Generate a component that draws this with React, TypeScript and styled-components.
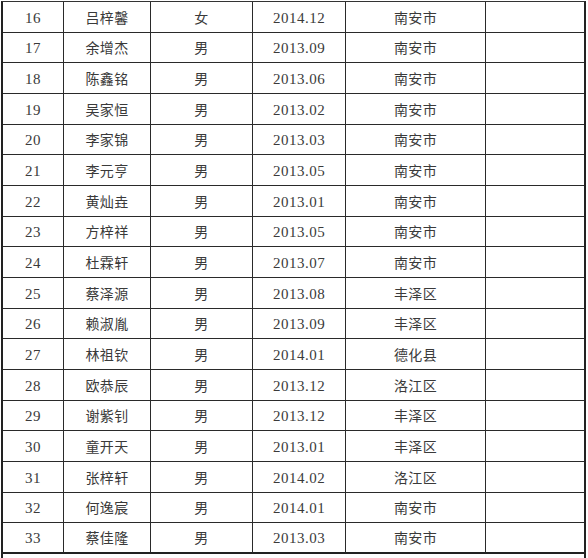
import React from 'react'
import styled, { createGlobalStyle } from 'styled-components'

const GlobalStyle = createGlobalStyle`
  html, body {
    margin: 0;
    padding: 0;
    background: #fff;
  }
`

const Page = styled.div`
  padding: 1px 0 0 1px;
  width: 588px;
  height: 558px;
  overflow: hidden;
  box-sizing: border-box;
`

const Sheet = styled.div`
  display: grid;
  grid-template-columns: 61px 87px 102px 93px 140px 98px;
  grid-auto-rows: 30.67px;
  width: 585px;
  box-sizing: border-box;
  border-top: 1px solid #333;
  border-left: 2px solid #222;
  border-right: 2px solid #222;
  color: #3a3a3a;
`

const Cell = styled.div<{ $latin?: boolean; $last?: boolean; $lastRow?: boolean }>`
  display: flex;
  align-items: center;
  justify-content: center;
  box-sizing: border-box;
  padding-top: ${({ $latin }) => ($latin ? '3px' : '0')};
  border-right: ${({ $last }) => ($last ? 'none' : '1px solid #2a2a2a')};
  border-bottom: ${({ $lastRow }) => ($lastRow ? '2px solid #222' : '1px solid #2a2a2a')};
  font-family: ${({ $latin }) =>
    $latin
      ? '"Liberation Serif", "Noto Sans CJK SC", serif'
      : '"Noto Sans CJK SC", sans-serif'};
  font-size: ${({ $latin }) => ($latin ? '15px' : '14px')};
  letter-spacing: ${({ $latin }) => ($latin ? '0.5px' : '0.3px')};
  line-height: 1;
  white-space: nowrap;
`

const Tail = styled.div`
  grid-column: 1 / -1;
`

const rows: [string, string, string, string, string][] = [
  ['16', '吕梓馨', '女', '2014.12', '南安市'],
  ['17', '余增杰', '男', '2013.09', '南安市'],
  ['18', '陈鑫铭', '男', '2013.06', '南安市'],
  ['19', '吴家恒', '男', '2013.02', '南安市'],
  ['20', '李家锦', '男', '2013.03', '南安市'],
  ['21', '李元亨', '男', '2013.05', '南安市'],
  ['22', '黄灿垚', '男', '2013.01', '南安市'],
  ['23', '方梓祥', '男', '2013.05', '南安市'],
  ['24', '杜霖轩', '男', '2013.07', '南安市'],
  ['25', '蔡泽源', '男', '2013.08', '丰泽区'],
  ['26', '赖淑胤', '男', '2013.09', '丰泽区'],
  ['27', '林祖钦', '男', '2014.01', '德化县'],
  ['28', '欧恭辰', '男', '2013.12', '洛江区'],
  ['29', '谢紫钊', '男', '2013.12', '丰泽区'],
  ['30', '童开天', '男', '2013.01', '丰泽区'],
  ['31', '张梓轩', '男', '2014.02', '洛江区'],
  ['32', '何逸宸', '男', '2014.01', '南安市'],
  ['33', '蔡佳隆', '男', '2013.03', '南安市'],
]

const App: React.FC = () => (
  <Page>
    <GlobalStyle />
    <Sheet>
      {rows.map(([no, name, sex, date, place], i) => {
        const lastRow = i === rows.length - 1
        return (
          <React.Fragment key={no}>
            <Cell $latin $lastRow={lastRow}>{no}</Cell>
            <Cell $lastRow={lastRow}>{name}</Cell>
            <Cell $lastRow={lastRow}>{sex}</Cell>
            <Cell $latin $lastRow={lastRow}>{date}</Cell>
            <Cell $lastRow={lastRow}>{place}</Cell>
            <Cell $last $lastRow={lastRow} />
          </React.Fragment>
        )
      })}
      <Tail />
    </Sheet>
  </Page>
)

export default App
